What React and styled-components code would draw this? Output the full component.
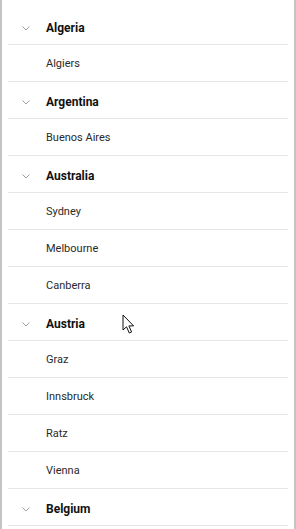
import { createGlobalStyle, styled } from "styled-components";

const data = [
  { country: "Algeria", cities: ["Algiers"] },
  { country: "Argentina", cities: ["Buenos Aires"] },
  { country: "Australia", cities: ["Sydney", "Melbourne", "Canberra"] },
  { country: "Austria", cities: ["Graz", "Innsbruck", "Ratz", "Vienna"] },
  { country: "Belgium", cities: [] },
];

const GlobalStyle = createGlobalStyle`
  html, body {
    margin: 0;
    padding: 0;
    background: #fff;
    overflow: hidden;
  }
  body {
    font-family: Roboto, "Liberation Sans", sans-serif;
  }
`;

const Chevron = () => (
  <ChevronIcon width="8" height="5" viewBox="0 0 8 5">
    <path d="M0.5 0.5 L4 4 L7.5 0.5" fill="none" stroke="#a0a0a0" strokeWidth="1" />
  </ChevronIcon>
);

const Cursor = () => (
  <CursorIcon width="14" height="21" viewBox="0 0 14 21">
    <path
      d="M1 1 L1 16 L4.5 12.8 L7.3 19 L9.6 18 L6.9 11.9 L11.6 11.9 Z"
      fill="#fff"
      stroke="#111"
      strokeWidth="1"
      strokeLinejoin="round"
    />
  </CursorIcon>
);

const App = () => {
  return (
    <>
      <GlobalStyle />
      <Frame>
        <List>
          {data.map((group) => (
            <Group key={group.country}>
              <HeaderRow>
                <Chevron />
                <CountryName>{group.country}</CountryName>
              </HeaderRow>
              {group.cities.map((city) => (
                <ItemRow key={city}>{city}</ItemRow>
              ))}
            </Group>
          ))}
        </List>
        <Cursor />
      </Frame>
    </>
  );
};

export default App;

const Frame = styled.div`
  position: relative;
  box-sizing: border-box;
  height: 100vh;
  overflow: hidden;
  border-left: 2px solid #c4c4c4;
  border-right: 2px solid #c4c4c4;
  padding: 8px 6px 0;
`;

const List = styled.div`
  display: flex;
  flex-direction: column;
`;

const Group = styled.div`
  display: flex;
  flex-direction: column;
`;

const Row = styled.div`
  display: flex;
  align-items: center;
  box-sizing: border-box;
  height: 37px;
  border-bottom: 1px solid #e6e6e6;
`;

const HeaderRow = styled(Row)`
  padding-left: 14px;
  padding-top: 4px;
  gap: 16px;
`;

const ChevronIcon = styled.svg`
  flex: none;
  display: block;
`;

const CountryName = styled.span`
  font-size: 12px;
  font-weight: 700;
  color: #111;
`;

const ItemRow = styled(Row)`
  padding-left: 38px;
  font-size: 11px;
  color: #2a2a2a;
`;

const CursorIcon = styled.svg`
  position: absolute;
  left: 120px;
  top: 314px;
`;
